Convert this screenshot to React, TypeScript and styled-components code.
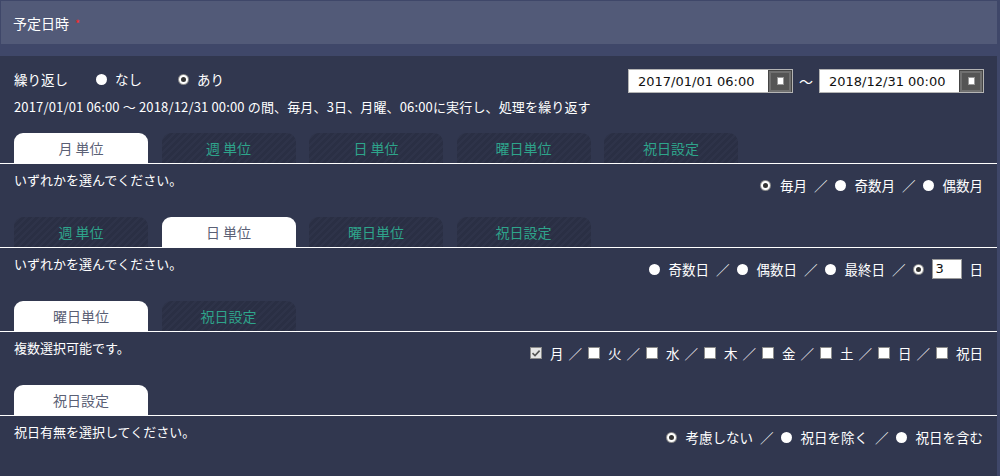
import styled, { createGlobalStyle, css } from "styled-components";

const GlobalStyle = createGlobalStyle`
  html, body {
    margin: 0;
    padding: 0;
    background: #3f4769;
  }
  body {
    font-family: "Noto Sans CJK JP", "Noto Sans", sans-serif;
    font-size: 13px;
    color: #ffffff;
  }
`;

type TabDef = { label: string; active?: boolean };

const SECTIONS: {
  tabs: TabDef[];
  note: string;
  kind: "radio" | "day" | "check";
  items: { label: string; checked?: boolean }[];
}[] = [
  {
    tabs: [
      { label: "月 単位", active: true },
      { label: "週 単位" },
      { label: "日 単位" },
      { label: "曜日単位" },
      { label: "祝日設定" },
    ],
    note: "いずれかを選んでください。",
    kind: "radio",
    items: [{ label: "毎月", checked: true }, { label: "奇数月" }, { label: "偶数月" }],
  },
  {
    tabs: [
      { label: "週 単位" },
      { label: "日 単位", active: true },
      { label: "曜日単位" },
      { label: "祝日設定" },
    ],
    note: "いずれかを選んでください。",
    kind: "day",
    items: [{ label: "奇数日" }, { label: "偶数日" }, { label: "最終日" }],
  },
  {
    tabs: [{ label: "曜日単位", active: true }, { label: "祝日設定" }],
    note: "複数選択可能です。",
    kind: "check",
    items: [
      { label: "月", checked: true },
      { label: "火" },
      { label: "水" },
      { label: "木" },
      { label: "金" },
      { label: "土" },
      { label: "日" },
      { label: "祝日" },
    ],
  },
  {
    tabs: [{ label: "祝日設定", active: true }],
    note: "祝日有無を選択してください。",
    kind: "radio",
    items: [{ label: "考慮しない", checked: true }, { label: "祝日を除く" }, { label: "祝日を含む" }],
  },
];

export default function App() {
  return (
    <Page>
      <GlobalStyle />
      <Header>
        予定日時<Required>*</Required>
      </Header>
      <Band />
      <Panel>
        <TopRow>
          <RepeatGroup>
            <span>繰り返し</span>
            <Option $first>
              <Radio />
              なし
            </Option>
            <Option>
              <Radio $checked />
              あり
            </Option>
          </RepeatGroup>
          <Dates>
            <DateInput>
              <DateText>2017/01/01 06:00</DateText>
              <PickerButton>
                <PickerMark />
              </PickerButton>
            </DateInput>
            <Tilde>〜</Tilde>
            <DateInput>
              <DateText>2018/12/31 00:00</DateText>
              <PickerButton>
                <PickerMark />
              </PickerButton>
            </DateInput>
          </Dates>
        </TopRow>
        <Summary>
          2017/01/01 06:00 〜 2018/12/31 00:00 の間、毎月、3日、月曜、06:00に実行し、処理を繰り返す
        </Summary>

        {SECTIONS.map((section, si) => (
          <Section key={si}>
            <TabBar>
              {section.tabs.map((tab) => (
                <Tab key={tab.label} $active={tab.active}>
                  {tab.label}
                </Tab>
              ))}
            </TabBar>
            <Body>
              <Note>{section.note}</Note>
              <Choices>
                {section.items.map((item, i) => (
                  <Choice key={item.label}>
                    {i > 0 && <Slash $tight={section.kind === "check"}>／</Slash>}
                    {section.kind === "check" ? (
                      <CheckBox $checked={item.checked}>
                        {item.checked && (
                          <svg width="10" height="10" viewBox="0 0 10 10">
                            <path d="M1.5 5.2 L4 7.6 L8.6 2.6" fill="none" stroke="#555" strokeWidth="1.6" />
                          </svg>
                        )}
                      </CheckBox>
                    ) : (
                      <Radio $checked={item.checked} />
                    )}
                    <ChoiceLabel>{item.label}</ChoiceLabel>
                  </Choice>
                ))}
                {section.kind === "day" && (
                  <Choice>
                    <Slash>／</Slash>
                    <Radio $checked />
                    <DayInput>3</DayInput>
                    <ChoiceLabel>日</ChoiceLabel>
                  </Choice>
                )}
              </Choices>
            </Body>
          </Section>
        ))}
      </Panel>
    </Page>
  );
}

const Page = styled.div`
  width: 997px;
  height: 476px;
  overflow: hidden;
  padding-top: 1px;
  box-sizing: border-box;
`;

const Header = styled.div`
  margin-left: 1px;
  height: 43px;
  background: #525a78;
  display: flex;
  align-items: center;
  padding-left: 12px;
  font-size: 14px;
  color: #ffffff;
`;

const Required = styled.span`
  color: #ff2a2a;
  margin-left: 6px;
  font-size: 11px;
`;

const Band = styled.div`
  height: 12px;
  background: #3f4769;
`;

const Panel = styled.div`
  background: #31374f;
  padding-top: 13px;
  height: 420px;
`;

const TopRow = styled.div`
  display: flex;
  justify-content: space-between;
  align-items: flex-start;
  padding: 0 13px 0 14px;
  height: 24px;
`;

const RepeatGroup = styled.div`
  display: flex;
  align-items: center;
  margin-top: 2px;
  line-height: 16px;
  font-size: 13.5px;
`;

const Option = styled.label<{ $first?: boolean }>`
  display: flex;
  align-items: center;
  margin-left: ${(p) => (p.$first ? "28px" : "36px")};
`;

const radioChecked = css`
  background: #333333;
  border: 2px solid #ffffff;
  box-shadow: 0 0 0 1px #8f8f8f;
  width: 5px;
  height: 5px;
  margin-left: 1px;
  margin-right: 9px;
`;

const Radio = styled.span<{ $checked?: boolean }>`
  display: inline-block;
  box-sizing: content-box;
  width: 11px;
  height: 11px;
  border-radius: 50%;
  background: #ffffff;
  margin-right: 8px;
  flex: none;
  ${(p) => p.$checked && radioChecked}
`;

const Dates = styled.div`
  display: flex;
  align-items: center;
`;

const DateInput = styled.div`
  display: flex;
  align-items: center;
  justify-content: space-between;
  width: 165px;
  height: 24px;
  box-sizing: border-box;
  border: 1px solid #b4b4b4;
  background: #ffffff;
  padding: 0 1px 0 9px;
  overflow: hidden;
`;

const DateText = styled.span`
  color: #111111;
  font-family: "DejaVu Sans", "Noto Sans CJK JP", sans-serif;
  font-size: 13px;
  white-space: nowrap;
  overflow: hidden;
  flex: 1;
`;

const PickerButton = styled.span`
  width: 22px;
  height: 21px;
  flex: none;
  box-sizing: border-box;
  background: #555555;
  border: 2px solid #707070;
  outline: 1px solid #444;
  display: flex;
  align-items: center;
  justify-content: center;
`;

const PickerMark = styled.span`
  width: 5px;
  height: 6px;
  background: #ffffff;
  border: 1px solid #999999;
`;

const Tilde = styled.span`
  margin: 0 6px;
  font-size: 14px;
`;

const Summary = styled.div`
  padding-left: 14px;
  margin-top: 6px;
  line-height: 16px;
  letter-spacing: 0.15px;
`;

const Section = styled.div`
  margin-top: 18px;
  & + & {
    margin-top: 0;
  }
`;

const TabBar = styled.div`
  display: flex;
  gap: 13.5px;
  padding-left: 14px;
  border-bottom: 1px solid #ffffff;
  height: 30px;
`;

const Tab = styled.div<{ $active?: boolean }>`
  width: 134px;
  height: 30px;
  border-radius: 9px 9px 0 0;
  display: flex;
  align-items: center;
  justify-content: center;
  font-size: 14px;
  color: ${(p) => (p.$active ? "#5a6075" : "#2ea48b")};
  background: ${(p) =>
    p.$active
      ? "#ffffff"
      : "repeating-linear-gradient(135deg, #2a2f44 0px, #2a2f44 3px, #2e3349 3px, #2e3349 5px)"};
`;

const Body = styled.div`
  height: 53px;
  box-sizing: border-box;
  padding: 8px 14px 0 14px;
  display: flex;
  justify-content: space-between;
  align-items: flex-start;
`;

const Note = styled.div`
  line-height: 16px;
`;

const Choices = styled.div`
  display: flex;
  align-items: center;
  height: 20px;
  margin-top: 3px;
  font-size: 13.5px;
`;

const Choice = styled.div`
  display: flex;
  align-items: center;
`;

const ChoiceLabel = styled.span`
  margin-left: 1px;
`;

const Slash = styled.span<{ $tight?: boolean }>`
  margin: ${(p) => (p.$tight ? "0 6px 0 5px" : "0 7px")};
`;

const CheckBox = styled.span<{ $checked?: boolean }>`
  width: 12px;
  height: 12px;
  box-sizing: border-box;
  border: 1px solid #8a8a8a;
  background: ${(p) => (p.$checked ? "#e6e6e6" : "#ffffff")};
  margin-right: 7px;
  display: flex;
  align-items: center;
  justify-content: center;
`;

const DayInput = styled.span`
  width: 30px;
  height: 20px;
  box-sizing: border-box;
  border: 1px solid #9a9a9a;
  background: #ffffff;
  color: #111111;
  padding-left: 3px;
  line-height: 18px;
  margin-right: 7px;
  font-family: "DejaVu Sans", sans-serif;
  font-size: 13px;
`;
